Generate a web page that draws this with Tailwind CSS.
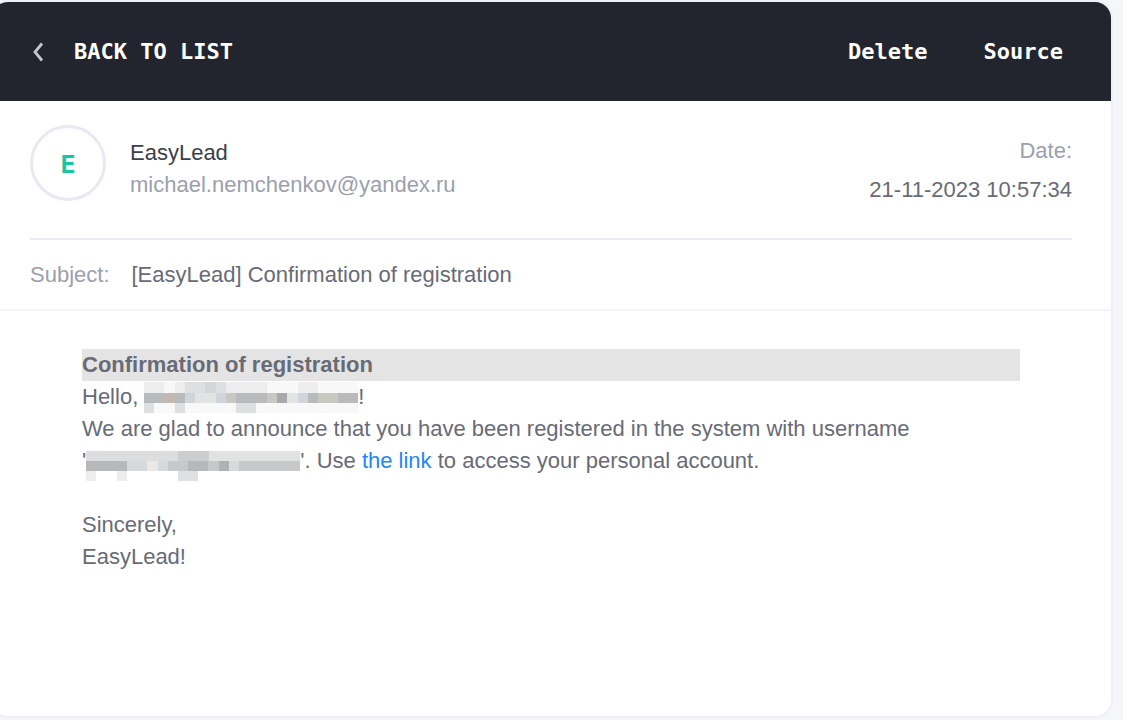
<!DOCTYPE html>
<html lang="en">
<head>
<meta charset="utf-8">
<title>EasyLead mail</title>
<script src="https://cdn.jsdelivr.net/npm/@tailwindcss/browser@4"></script>
</head>
<body class="min-h-screen bg-[#f4f6f9] pr-3 pt-[2px] pb-[4px] flex font-['Liberation_Sans',Arial,sans-serif] text-[22px] leading-8 text-[#686b76]">
<main class="flex-1 -ml-2 bg-white rounded-2xl overflow-hidden shadow-[0_0_0_2px_#efeff6]">
  <header class="bg-[#22252d] h-[99px] pl-10 pr-12 flex items-center justify-between text-white font-bold font-['DejaVu_Sans_Mono',monospace]">
    <button class="flex items-center gap-[30px]">
      <svg class="w-3 h-5" viewBox="0 0 12 20" fill="none" stroke="#c4c6cc" stroke-width="2.8"><path d="M10 1.500L3 10L10 18.500"/></svg>
      <span>BACK TO LIST</span>
    </button>
    <nav class="flex gap-14"><button>Delete</button><button>Source</button></nav>
  </header>
  <section class="ml-[38px] mr-[39px] h-[139px] pt-6 flex justify-between border-b-2 border-[#ebebf4]">
    <div class="flex gap-6">
      <div class="size-[76px] rounded-full border-3 border-[#e9e8f3] flex items-center justify-center pt-1 font-['Inter',sans-serif] font-bold text-2xl text-[#14c8a0]">E</div>
      <div class="pt-3"><h1 class="text-[#3c3f4a]">EasyLead</h1><p class="text-[#9ba0ad]">michael.nemchenkov@yandex.ru</p></div>
    </div>
    <div class="text-right pt-[10px] flex flex-col gap-[7px]"><p class="text-[#9ba0ad]">Date:</p><p>21-11-2023 10:57:34</p></div>
  </section>
  <section class="pl-[38px] h-[71px] flex items-center gap-[22px] border-b-2 border-[#f3f3f8]"><span class="text-[#9ba0ad]">Subject:</span><h2>[EasyLead] Confirmation of registration</h2></section>
  <article class="pl-[90px] pr-[91px] pt-[38px]">
    <h3 class="bg-[#e4e4e4] font-bold">Confirmation of registration</h3>
    <p class="flex whitespace-pre"><span>Hello, </span><svg class="w-[214px] h-8" viewBox="0 0 214 32" aria-label="Hidden username">
      <path fill="#f8f8f8" d="M0 1h214v31H0z"/>
      <path fill="#ededee" d="M0 1h20v11H0zM31 1h10v11H31zM82 1h41v11H82zM154 1h20v11h-20z"/>
      <path fill="#dddfe0" d="M41 1h20v11H41zM72 1h10v11H72zM0 22h10v10H0zM31 22h10v10H31zM92 22h20v10H92z"/>
      <path fill="#d4d7da" d="M61 1h11v11H61z"/>
      <path fill="#b9babc" d="M0 12h41v10H0zM92 12h41v10H92zM164 12h50v10h-50z"/>
      <path fill="#c3b9b2" d="M20 12h11v10H20z"/>
      <path fill="#d0d5dc" d="M41 12h10v10H41zM72 12h10v10H72zM154 12h10v10h-10z"/>
      <path fill="#e3e3e3" d="M51 12h21v10H51zM143 12h11v10h-11z"/>
      <path fill="#c8c8c3" d="M82 12h10v10H82zM123 12h10v10h-10zM174 12h20v10h-20z"/>
      <path fill="#a8a9ab" d="M133 12h10v10h-10z"/>
    </svg><span>!</span></p>
    <p>We are glad to announce that you have been registered in the system with username</p>
    <p class="flex whitespace-pre"><span>'</span><svg class="w-[214px] h-9 -mb-1" viewBox="0 0 214 36" aria-label="Hidden username">
      <path fill="#dcdddf" d="M0 6h92v10H0z"/>
      <path fill="#cccdce" d="M92 6h31v10H92z"/>
      <path fill="#e1e2e2" d="M123 6h91v10h-91z"/>
      <path fill="#b6b8b9" d="M0 16h41v10H0zM102 16h20v10h-20z"/>
      <path fill="#d7dadd" d="M41 16h41v10H41zM143 16h10v10h-10z"/>
      <path fill="#ebe8e5" d="M61 16h11v10H61z"/>
      <path fill="#c6c8ca" d="M82 16h20v10H82zM122 16h11v10h-11zM153 16h61v10h-61z"/>
      <path fill="#b0b1b2" d="M133 16h10v10h-10z"/>
      <path fill="#ededee" d="M0 26h10v10H0zM31 26h10v10H31z"/>
      <path fill="#dfe0e1" d="M92 26h20v10H92z"/>
    </svg><span>'. Use </span><a href="#" class="text-[#2187f5]">the link</a><span> to access your personal account.</span></p>
    <p class="mt-8">Sincerely,<br>EasyLead!</p>
  </article>
</main>
</body>
</html>
